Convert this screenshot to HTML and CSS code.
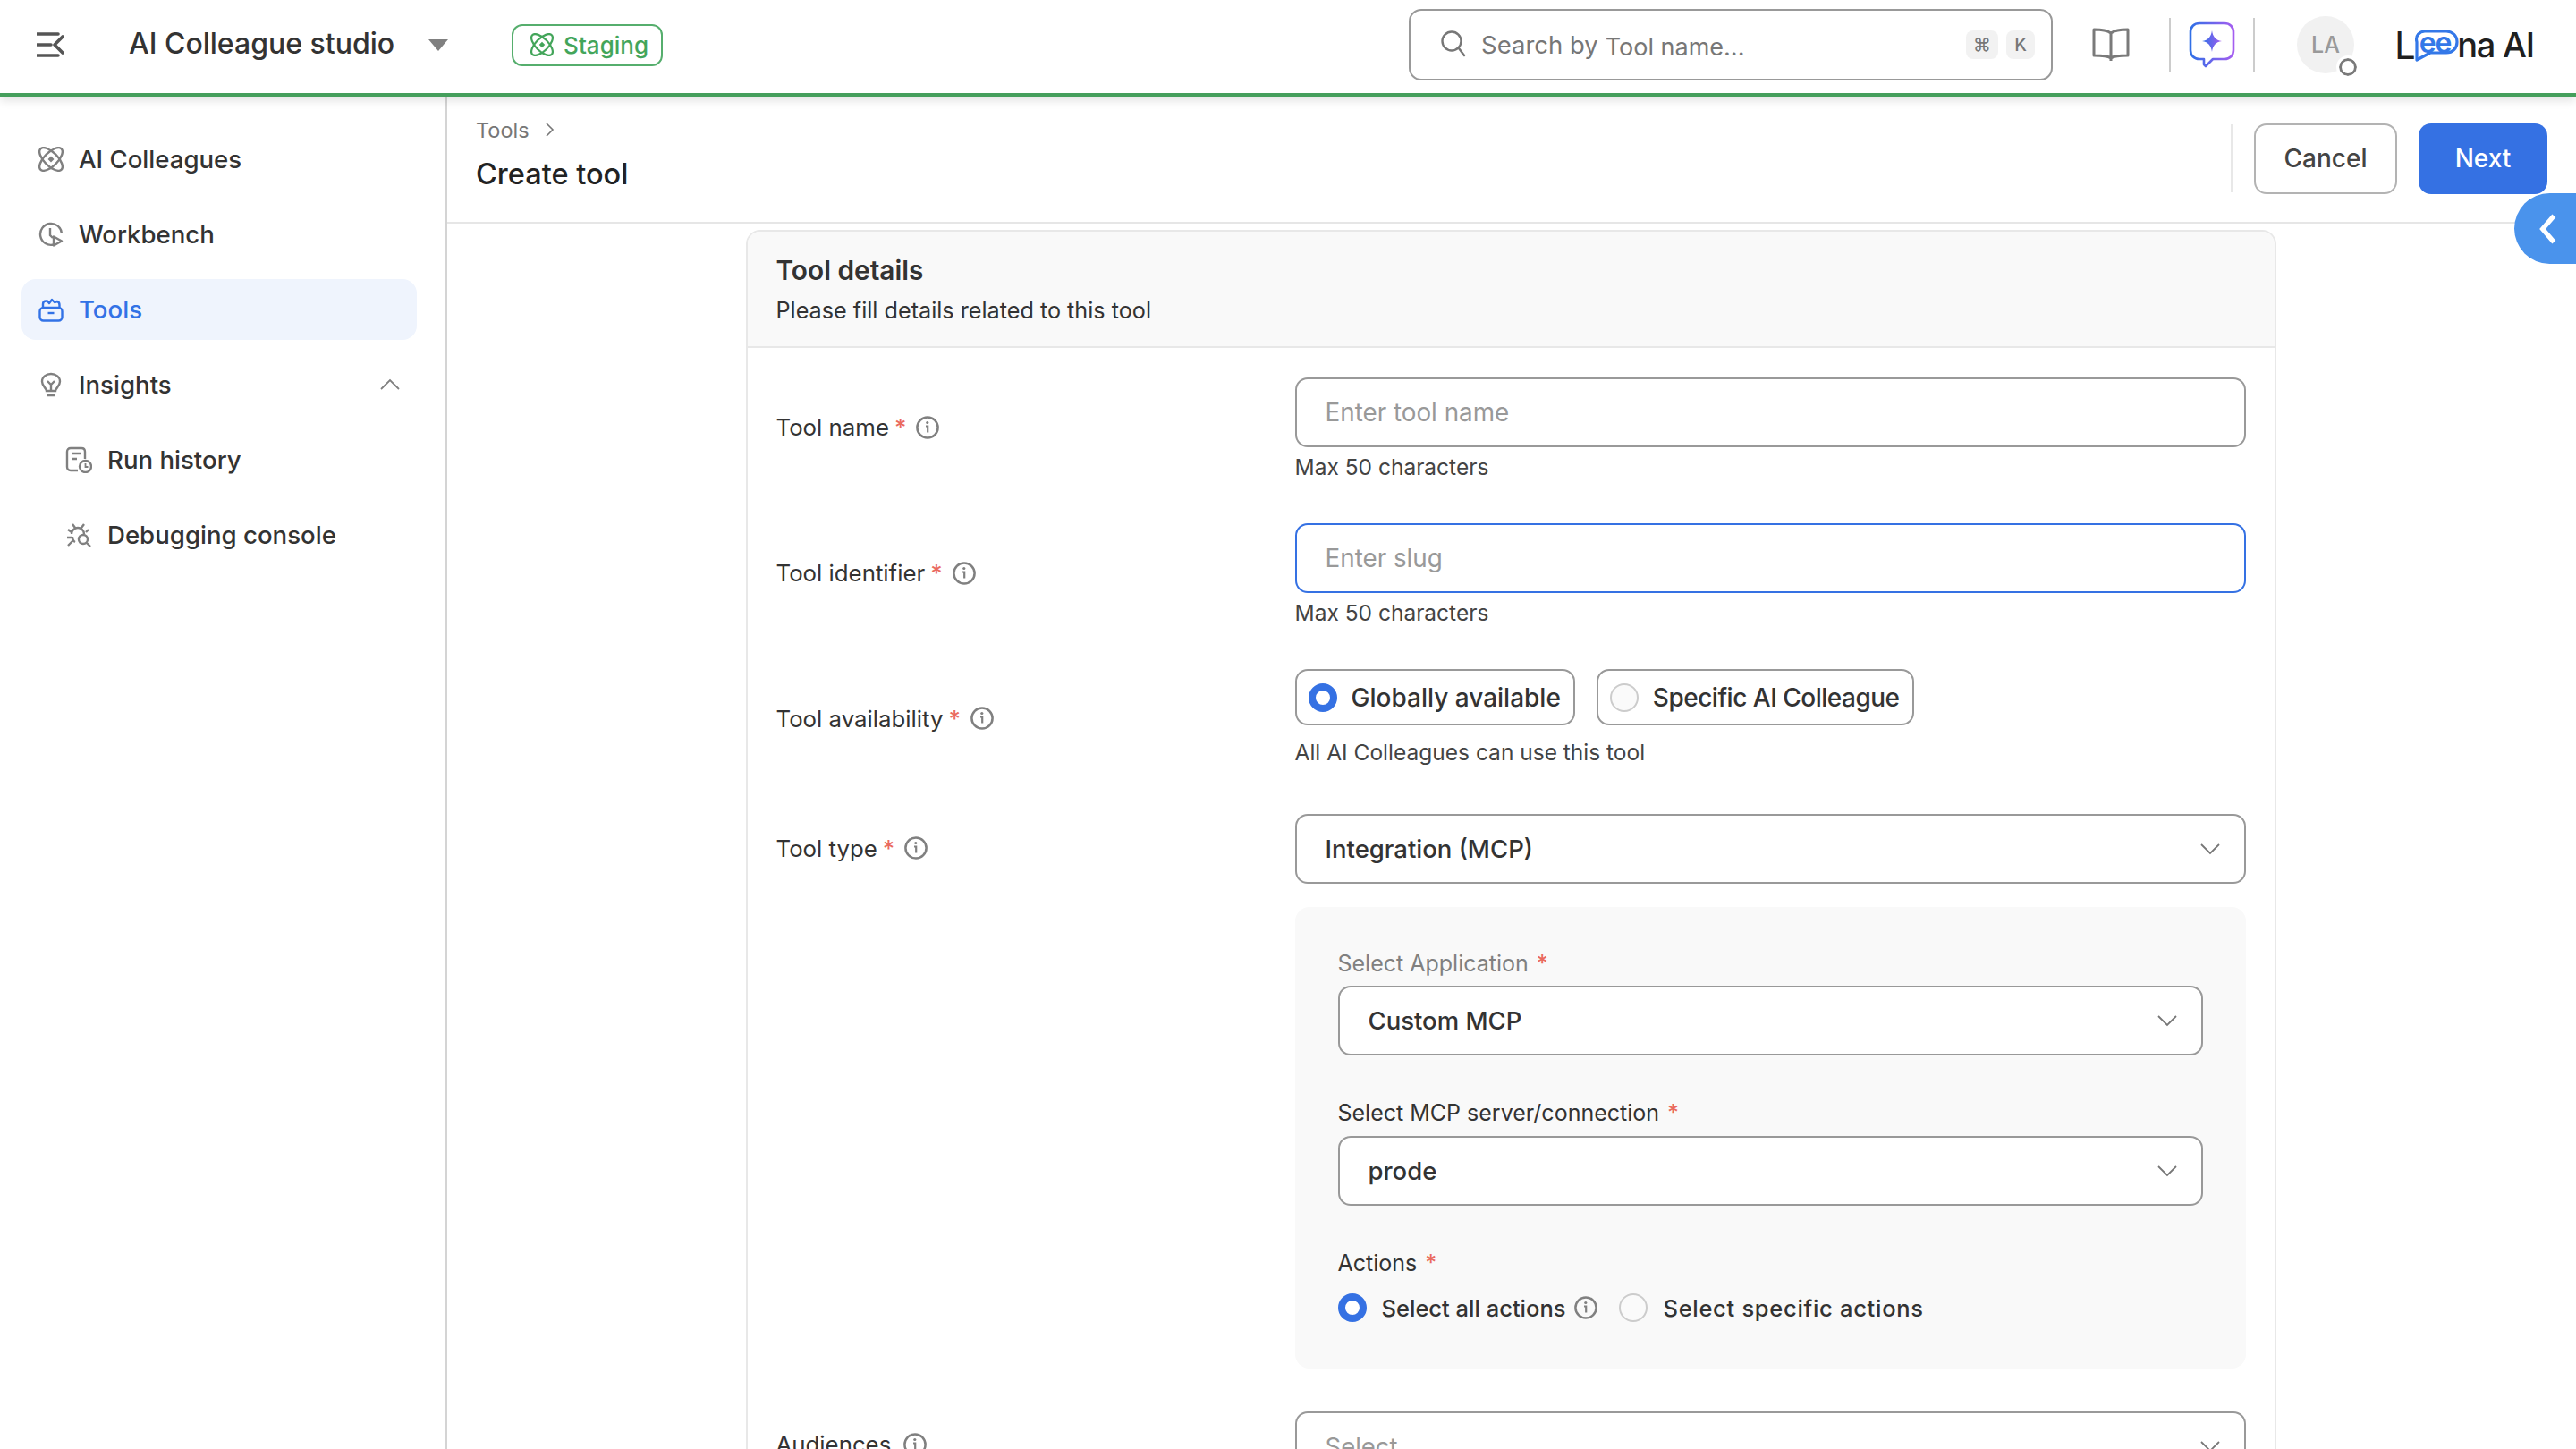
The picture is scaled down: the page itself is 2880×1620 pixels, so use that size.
FILE: index.html
```html
<!DOCTYPE html>
<html>
<head>
    <link rel="stylesheet" href="styles.css">
</head>
<body>
    <svg class="icon-defs" width="0" height="0">
        <defs>
            <symbol id="atom" viewBox="0 0 28 28">
                <ellipse cx="14" cy="14" rx="16.500" ry="7.500" transform="rotate(45 14 14)" fill="none" stroke="currentColor" stroke-width="2.400"/>
                <ellipse cx="14" cy="14" rx="16.500" ry="7.500" transform="rotate(-45 14 14)" fill="none" stroke="currentColor" stroke-width="2.400"/>
                <path d="M14 10.500l3.500 3.500-3.500 3.500-3.500-3.500z" fill="currentColor"/>
            </symbol>
            <symbol id="info" viewBox="0 0 26 26">
                <circle cx="13" cy="13" r="11.600" fill="none" stroke="currentColor" stroke-width="2.500"/>
                <path d="M11 11.500h2.200v7" fill="none" stroke="currentColor" stroke-width="2.200"/>
                <circle cx="12.800" cy="7.500" r="1.600" fill="currentColor"/>
            </symbol>
            <symbol id="chevron" viewBox="0 0 24 14">
                <path d="M2 2l10 10L22 2" fill="none" stroke="currentColor" stroke-width="1.800"/>
            </symbol>
        </defs>
    </svg>

    <header class="topbar">
        <svg class="menu-icon" viewBox="0 0 30 30">
            <path d="M0 3h24M0 15h16M0 27h24" stroke="#555" stroke-width="3.600" stroke-linecap="round"/>
            <path d="M29 6l-9 9 9 9" fill="none" stroke="#555" stroke-width="3.600" stroke-linecap="round" stroke-linejoin="round"/>
        </svg>
        <div class="studio-name">AI Colleague studio</div>
        <div class="caret"></div>
        <div class="env-badge">
            <svg class="env-icon"><use href="#atom"/></svg>
            <span>Staging</span>
        </div>

        <div class="search">
            <svg class="search-icon" viewBox="0 0 28 30">
                <circle cx="12" cy="12" r="10.500" fill="none" stroke="#777" stroke-width="2.400"/>
                <path d="M20 20l6 8" stroke="#777" stroke-width="2.400" stroke-linecap="round"/>
            </svg>
            <span class="search-text">Search by</span>
            <span class="search-rotating">Tool name...</span>
            <span class="kbd kbd-cmd">⌘</span>
            <span class="kbd">K</span>
        </div>

        <svg class="book-icon" viewBox="0 0 42 38">
            <path d="M21 6C17 3 10 2 2 2v29c8 0 15 0 19 3 4-3 11-3 19-3V2c-8 0-15 1-19 4zM21 6v31" fill="none" stroke="#7a7a7a" stroke-width="3" stroke-linejoin="round"/>
        </svg>
        <div class="top-divider"></div>
        <svg class="assist-icon" viewBox="0 0 52 52">
            <defs>
                <linearGradient id="assistGrad" x1="0" y1="0" x2="1" y2="0">
                    <stop offset="0" stop-color="#2f6fe6"/>
                    <stop offset="1" stop-color="#a45df0"/>
                </linearGradient>
            </defs>
            <path d="M12 2h28c6 0 10 4 10 10v20c0 6-4 10-10 10H27l-8 8-2-2v-6h-5C6 42 2 38 2 32V12C2 6 6 2 12 2z" fill="none" stroke="url(#assistGrad)" stroke-width="2.600" stroke-linejoin="round"/>
            <path d="M26 10c1 7 4 11 11 12-7 1-10 5-11 12-1-7-4-11-11-12 7-1 10-5 11-12z" fill="url(#assistGrad)"/>
        </svg>
        <div class="top-divider top-divider-b"></div>
        <div class="avatar">LA<span class="status-dot"></span></div>
        <div class="logo">
            <span class="logo-l">L</span>
            <span class="logo-bubble">
                <svg class="logo-bubble-shape" viewBox="0 0 52 36">
                    <path d="M14 2h24c7 0 12 5 12 12s-5 12-12 12H20L5 34V14C3 7 8 2 14 2z" fill="#fff" stroke="#3478e8" stroke-width="3.200" stroke-linejoin="round"/>
                </svg>
                <span class="logo-ee">ee</span>
            </span>
            <span>na AI</span>
        </div>
    </header>

    <div class="app-body">
        <nav class="sidebar">
            <div class="nav-item">
                <svg class="nav-icon"><use href="#atom"/></svg>
                <span>AI Colleagues</span>
            </div>
            <div class="nav-item">
                <svg class="nav-icon" viewBox="0 0 28 28">
                    <path d="M17 25.500A12 12 0 1 1 26 13" fill="none" stroke="currentColor" stroke-width="2.400"/>
                    <path d="M13 7v8l3 3" fill="none" stroke="currentColor" stroke-width="2.400"/>
                    <path d="M17 16.500l9 5-9 5z" fill="none" stroke="currentColor" stroke-width="2.400" stroke-linejoin="round"/>
                </svg>
                <span>Workbench</span>
            </div>
            <div class="nav-item nav-item-active">
                <svg class="nav-icon" viewBox="0 0 28 28">
                    <path d="M5 13V8c0-2 1.500-3.500 3.500-3.500H10l2 2.500 3-4 3 3 3-1c2 .5 2.500 2 2.500 4v4" fill="none" stroke="currentColor" stroke-width="2.400" stroke-linejoin="round"/>
                    <rect x="1.500" y="12" width="25" height="14.500" rx="4" fill="none" stroke="currentColor" stroke-width="2.400"/>
                    <path d="M10.500 18h7" stroke="currentColor" stroke-width="2.400"/>
                </svg>
                <span>Tools</span>
            </div>
            <div class="nav-item">
                <svg class="nav-icon" viewBox="0 0 28 28">
                    <path d="M9 21c0-3-5-5-5-10.500C4 5.500 8.500 2 14 2s10 3.500 10 8.500C24 16 19 18 19 21z" fill="none" stroke="currentColor" stroke-width="2.400"/>
                    <path d="M10 10l4 4 4-4M14 14v7M9 26h10" fill="none" stroke="currentColor" stroke-width="2.400"/>
                </svg>
                <span>Insights</span>
                <svg class="nav-chevron"><use href="#chevron"/></svg>
            </div>
            <div class="nav-item nav-sub">
                <svg class="nav-icon nav-icon-wide" viewBox="0 0 30 30">
                    <path d="M14 27H6c-2.500 0-4-1.500-4-4V6c0-2.500 1.500-4 4-4h12c2.500 0 4 1.500 4 4v8" fill="none" stroke="currentColor" stroke-width="2.400"/>
                    <path d="M7 8h10M7 14h6" stroke="currentColor" stroke-width="2.400"/>
                    <circle cx="22.500" cy="22.500" r="6.500" fill="none" stroke="currentColor" stroke-width="2.400"/>
                    <path d="M22.500 19v4h3" fill="none" stroke="currentColor" stroke-width="1.800"/>
                </svg>
                <span>Run history</span>
            </div>
            <div class="nav-item nav-sub">
                <svg class="nav-icon nav-icon-wide" viewBox="0 0 30 30">
                    <path d="M7 14a7 7 0 0 1 14 0M8 3l3 4M21 3l-3 4M3 9l4 3M26 9l-3 3M2 18h5M3 27l5-5M8 17c0 3 1 5 3 6" fill="none" stroke="currentColor" stroke-width="2.400"/>
                    <circle cx="20" cy="20" r="5" fill="none" stroke="currentColor" stroke-width="2.400"/>
                    <path d="M24 24l4 4" stroke="currentColor" stroke-width="2.400"/>
                </svg>
                <span>Debugging console</span>
            </div>
        </nav>

        <main class="main">
            <div class="page-header">
                <div class="page-heading">
                    <div class="breadcrumb">
                        <span>Tools</span>
                        <svg class="crumb-chevron" viewBox="0 0 10 16"><path d="M1 1l7 7-7 7" fill="none" stroke="#777" stroke-width="1.600"/></svg>
                    </div>
                    <div class="page-title">Create tool</div>
                </div>
                <div class="action-divider"></div>
                <button class="btn btn-cancel">Cancel</button>
                <button class="btn btn-next">Next</button>
            </div>
            <div class="side-tab">
                <svg viewBox="0 0 20 34" class="side-tab-icon"><path d="M16 3L4 17l12 14" fill="none" stroke="#fff" stroke-width="5"/></svg>
            </div>

            <div class="content">
                <section class="card">
                    <div class="card-header">
                        <div class="card-title">Tool details</div>
                        <div class="card-subtitle">Please fill details related to this tool</div>
                    </div>
                    <div class="card-body">
                        <div class="form-row">
                            <div class="form-label">Tool name <span class="req">*</span><svg class="info-icon"><use href="#info"/></svg></div>
                            <div class="form-control">
                                <input class="text-input" placeholder="Enter tool name">
                                <div class="hint">Max 50 characters</div>
                            </div>
                        </div>
                        <div class="form-row">
                            <div class="form-label">Tool identifier <span class="req">*</span><svg class="info-icon"><use href="#info"/></svg></div>
                            <div class="form-control">
                                <input class="text-input text-input-focus" placeholder="Enter slug">
                                <div class="hint">Max 50 characters</div>
                            </div>
                        </div>
                        <div class="form-row">
                            <div class="form-label">Tool availability <span class="req">*</span><svg class="info-icon"><use href="#info"/></svg></div>
                            <div class="form-control">
                                <div class="radio-cards">
                                    <div class="radio-card"><span class="radio radio-on"></span>Globally available</div>
                                    <div class="radio-card radio-card-tight"><span class="radio"></span>Specific AI Colleague</div>
                                </div>
                                <div class="hint hint-radio">All AI Colleagues can use this tool</div>
                            </div>
                        </div>
                        <div class="form-row">
                            <div class="form-label">Tool type <span class="req">*</span><svg class="info-icon"><use href="#info"/></svg></div>
                            <div class="form-control">
                                <div class="select">Integration (MCP)<svg class="select-chevron"><use href="#chevron"/></svg></div>
                            </div>
                        </div>

                        <div class="form-row form-row-panel">
                            <div class="form-label"></div>
                            <div class="sub-panel">
                                <div class="sub-label sub-label-muted">Select Application <span class="req">*</span></div>
                                <div class="select">Custom MCP<svg class="select-chevron"><use href="#chevron"/></svg></div>
                                <div class="sub-label">Select MCP server/connection <span class="req">*</span></div>
                                <div class="select">prode<svg class="select-chevron"><use href="#chevron"/></svg></div>
                                <div class="sub-label">Actions <span class="req">*</span></div>
                                <div class="radio-line">
                                    <span class="radio radio-on"></span>
                                    <span class="radio-text">Select all actions</span>
                                    <svg class="info-icon"><use href="#info"/></svg>
                                    <span class="radio radio-second"></span>
                                    <span class="radio-text radio-text-wide">Select specific actions</span>
                                </div>
                            </div>
                        </div>

                        <div class="form-row form-row-last">
                            <div class="form-label">Audiences<svg class="info-icon info-icon-plain"><use href="#info"/></svg></div>
                            <div class="form-control">
                                <div class="select select-empty">Select<svg class="select-chevron"><use href="#chevron"/></svg></div>
                            </div>
                        </div>
                    </div>
                </section>
            </div>
        </main>
    </div>
</body>
</html>
```

FILE: styles.css
```css
* {
    box-sizing: border-box;
}

html, body {
    height: 100%;
    margin: 0;
    overflow: hidden;
}

body {
    background-color: #fff;
    font-family: Inter, "Noto Sans", Arial, sans-serif;
    color: #333;
    display: flex;
    flex-direction: column;
}

.icon-defs {
    position: absolute;
}

/* top bar */
.topbar {
    height: 108px;
    flex: none;
    display: flex;
    align-items: center;
    padding: 0 47px 4px 41px;
    background-color: #fff;
    border-bottom: 4px solid #459f5c;
    box-shadow: 0 4px 10px rgba(0,0,0,0.12);
    position: relative;
    z-index: 2;
}

.menu-icon {
    width: 30px;
    height: 30px;
    flex: none;
}

.studio-name {
    margin-left: 73px;
    font-size: 32px;
    font-weight: 500;
    color: #333;
    position: relative;
    top: -2px;
}

.caret {
    margin-left: 38px;
    width: 0;
    height: 0;
    border-left: 11px solid transparent;
    border-right: 11px solid transparent;
    border-top: 13px solid #808080;
}

.env-badge {
    margin-left: 71px;
    width: 169px;
    height: 47px;
    display: flex;
    align-items: center;
    padding-left: 19px;
    border: 2px solid #56ae6d;
    border-radius: 12px;
    color: #43a55a;
    font-size: 26px;
    font-weight: 500;
}

.env-icon {
    width: 26px;
    height: 26px;
    margin-right: 11px;
}

.search {
    margin-left: auto;
    width: 720px;
    height: 80px;
    display: flex;
    align-items: center;
    padding: 0 18px 0 34px;
    border: 2px solid #999;
    border-radius: 14px;
    color: #777;
    font-size: 27.500px;
}

.search-icon {
    width: 28px;
    height: 30px;
    margin-right: 17px;
    margin-top: -2px;
}

.search-rotating {
    margin-left: 8px;
    position: relative;
    top: 2px;
    margin-right: auto;
    font-size: 27px;
}

.kbd {
    height: 32px;
    min-width: 32px;
    display: flex;
    align-items: center;
    justify-content: center;
    background-color: #f2f2f2;
    border-radius: 8px;
    font-size: 20px;
    font-weight: 500;
}

.kbd-cmd {
    width: 36px;
    margin-right: 9px;
}

.book-icon {
    width: 42px;
    height: 38px;
    margin-left: 44px;
    flex: none;
}

.top-divider {
    width: 2px;
    height: 60px;
    margin-left: 44px;
    background-color: #ccc;
    flex: none;
}

.top-divider-b {
    margin-left: 20px;
}

.assist-icon {
    width: 52px;
    height: 52px;
    margin-left: 20px;
    flex: none;
}

.avatar {
    width: 64px;
    height: 64px;
    margin-left: 47px;
    border-radius: 50%;
    background-color: #f1f1f1;
    color: #999;
    font-size: 25px;
    font-weight: 500;
    display: flex;
    align-items: center;
    justify-content: center;
    position: relative;
    flex: none;
}

.status-dot {
    position: absolute;
    right: -3px;
    bottom: -3px;
    width: 20px;
    height: 20px;
    border-radius: 50%;
    background-color: #fff;
    border: 3px solid #7a7a7a;
    outline: 3px solid #fff;
}

.logo {
    margin-left: 48px;
    width: 153px;
    display: flex;
    align-items: center;
    font-size: 38px;
    font-weight: 500;
    color: #1f1f1f;
    height: 50px;
    flex: none;
    letter-spacing: -1.200px;
    white-space: nowrap;
}

.logo-l {
    width: 20px;
    font-size: 42px;
    font-weight: 400;
    margin-left: -3px;
}

.logo-bubble {
    position: relative;
    width: 50px;
    height: 40px;
    margin-right: 1px;
    display: flex;
    align-items: center;
    justify-content: center;
}

.logo-bubble-shape {
    position: absolute;
    left: 0;
    top: 3px;
    width: 52px;
    height: 36px;
}

.logo-ee {
    position: relative;
    color: #3478e8;
    font-size: 32px;
    font-weight: 600;
    top: -3px;
    left: 1px;
    letter-spacing: -1px;
}

/* layout */
.app-body {
    flex: 1;
    display: flex;
    min-height: 0;
}

.sidebar {
    width: 500px;
    flex: none;
    padding: 36px 32px 0 24px;
    border-right: 2px solid #d4d4d4;
}

.nav-item {
    height: 68px;
    margin-bottom: 16px;
    padding: 0 18px 0 19px;
    display: flex;
    align-items: center;
    border-radius: 16px;
    font-size: 27.600px;
    font-weight: 500;
    color: #333;
}

.nav-item svg {
    color: #808080;
}

.nav-icon {
    width: 28px;
    height: 28px;
    margin-right: 17px;
    flex: none;
}

.nav-item-active {
    background-color: #eff4fd;
    color: #3272e6;
}

.nav-item-active svg {
    color: #3272e6;
}

.nav-chevron {
    width: 24px;
    height: 14px;
    margin-left: auto;
    transform: rotate(180deg);
}

.nav-sub {
    padding-left: 49px;
}

.nav-icon-wide {
    width: 30px;
    height: 30px;
    margin-right: 17px;
}

.main {
    flex: 1;
    min-width: 0;
    display: flex;
    flex-direction: column;
    position: relative;
}

.page-header {
    height: 142px;
    flex: none;
    display: flex;
    align-items: center;
    padding: 0 32px 2px 32px;
    border-bottom: 2px solid #e6e6e6;
}

.page-heading {
    margin-right: auto;
    position: relative;
    top: -5px;
}

.breadcrumb {
    display: flex;
    align-items: center;
    font-size: 23.500px;
    color: #777;
    height: 32px;
    margin-bottom: 14px;
}

.crumb-chevron {
    width: 10px;
    height: 16px;
    margin-left: 18px;
}

.page-title {
    font-size: 32.500px;
    font-weight: 500;
    color: #222;
    line-height: 40px;
}

.action-divider {
    width: 2px;
    height: 76px;
    background-color: #e8e8e8;
    margin-right: 24px;
}

.btn {
    height: 79px;
    border-radius: 14px;
    font-family: inherit;
    font-size: 28px;
    font-weight: 500;
}

.btn-cancel {
    width: 160px;
    background-color: #fff;
    border: 2px solid #b3b3b3;
    color: #444;
    margin-right: 24px;
}

.btn-next {
    width: 144px;
    background-color: #3571e3;
    border: none;
    color: #fff;
}

.side-tab {
    position: absolute;
    right: 0;
    top: 108px;
    width: 69px;
    height: 79px;
    background-color: #4a93ec;
    border-radius: 40px 0 0 40px;
    display: flex;
    align-items: center;
    padding-left: 27px;
    z-index: 1;
}

.side-tab-icon {
    width: 22px;
    height: 36px;
}

.content {
    flex: 1;
    overflow: hidden;
    padding-top: 7px;
}

/* form card */
.card {
    width: 1711px;
    margin: 0 auto;
    border: 2px solid #e8e8e8;
    border-bottom: none;
    border-radius: 16px 16px 0 0;
    transform: translateX(-1px);
}

.card-header {
    height: 130px;
    padding: 23px 32px 0;
    background-color: #f9f9f9;
    border-bottom: 2px solid #e8e8e8;
    border-radius: 14px 14px 0 0;
}

.card-title {
    font-size: 29.800px;
    font-weight: 600;
    color: #333;
    line-height: 40px;
}

.card-subtitle {
    margin-top: 7px;
    font-size: 25.200px;
    color: #333;
    line-height: 36px;
}

.card-body {
    padding: 33px 32px 0;
}

.form-row {
    display: flex;
    align-items: center;
    margin-bottom: 50px;
}

.form-row-panel {
    margin-top: -24px;
    margin-bottom: 48px;
}

.form-row-last {
    align-items: flex-start;
}

.form-label {
    width: 580px;
    flex: none;
    display: flex;
    align-items: center;
    font-size: 25.800px;
    color: #333;
    position: relative;
    top: -1px;
}

.form-row-last .form-label {
    padding-top: 22px;
}

.req {
    color: #ea6a5e;
    font-weight: 500;
    margin: 0 11px 0 6px;
}

.info-icon {
    width: 26px;
    height: 26px;
    color: #808080;
    flex: none;
}

.info-icon-plain {
    margin-left: 14px;
}

.form-control {
    width: 1063px;
    flex: none;
}

.text-input {
    display: block;
    width: 100%;
    height: 78px;
    padding: 0 32px;
    border: 2px solid #999;
    border-radius: 14px;
    font-family: inherit;
    font-size: 27.800px;
    outline: none;
}

.text-input::placeholder {
    color: #999;
}

.text-input-focus {
    border-color: #3571e3;
}

.hint {
    margin-top: 9px;
    font-size: 24.500px;
    color: #444;
    line-height: 26px;
}

.hint-radio {
    margin-top: 17px;
    margin-bottom: 6px;
}

.radio-cards {
    display: flex;
    gap: 24px;
}

.radio-card {
    height: 63px;
    padding: 0 14px 0 13px;
    display: flex;
    align-items: center;
    gap: 16px;
    border: 2px solid #999;
    border-radius: 14px;
    font-size: 28px;
    font-weight: 500;
    color: #333;
}

.radio-card-tight {
    letter-spacing: -0.5px;
}

.radio {
    width: 32px;
    height: 32px;
    border-radius: 50%;
    border: 2px solid #ccc;
    background-color: #fafafa;
    flex: none;
}

.radio-on {
    border: 8px solid #3571e3;
    background-color: #fff;
}

.select {
    height: 78px;
    padding: 0 26px 0 32px;
    display: flex;
    align-items: center;
    justify-content: space-between;
    background-color: #fff;
    border: 2px solid #999;
    border-radius: 14px;
    font-size: 27.500px;
    font-weight: 500;
    color: #333;
}

.select-empty {
    color: #999;
    font-weight: 400;
}

.select-chevron {
    width: 24px;
    height: 14px;
    color: #777;
}

.sub-panel {
    width: 1063px;
    height: 516px;
    flex: none;
    padding: 47px 48px 0;
    background-color: #f9f9f9;
    border-radius: 16px;
}

.sub-label {
    margin: 48px 0 10px;
    font-size: 25px;
    line-height: 32px;
    color: #333;
}

.sub-label-muted {
    margin-top: 0;
    margin-bottom: 9px;
    color: #808080;
}

.sub-label .req {
    margin: 0 0 0 2px;
}

.radio-line {
    display: flex;
    align-items: center;
    margin-top: 18px;
    font-size: 25.500px;
    font-weight: 500;
}

.radio-text {
    margin-left: 17px;
}

.radio-text-wide {
    letter-spacing: 0.7px;
}

.radio-line .info-icon {
    margin-left: 10px;
}

.radio-second {
    margin-left: 24px;
}
```
